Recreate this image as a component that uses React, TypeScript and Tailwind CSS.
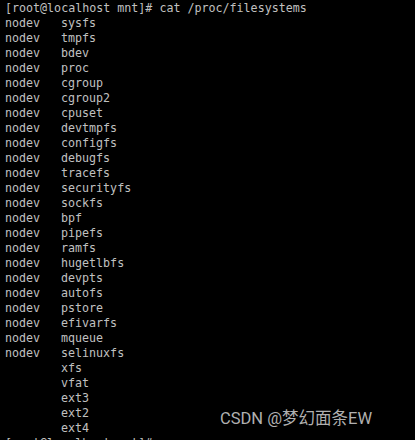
import React from "react";

const rows: [string, string][] = [
  ["nodev", "sysfs"],
  ["nodev", "tmpfs"],
  ["nodev", "bdev"],
  ["nodev", "proc"],
  ["nodev", "cgroup"],
  ["nodev", "cgroup2"],
  ["nodev", "cpuset"],
  ["nodev", "devtmpfs"],
  ["nodev", "configfs"],
  ["nodev", "debugfs"],
  ["nodev", "tracefs"],
  ["nodev", "securityfs"],
  ["nodev", "sockfs"],
  ["nodev", "bpf"],
  ["nodev", "pipefs"],
  ["nodev", "ramfs"],
  ["nodev", "hugetlbfs"],
  ["nodev", "devpts"],
  ["nodev", "autofs"],
  ["nodev", "pstore"],
  ["nodev", "efivarfs"],
  ["nodev", "mqueue"],
  ["nodev", "selinuxfs"],
  ["", "xfs"],
  ["", "vfat"],
  ["", "ext3"],
  ["", "ext2"],
  ["", "ext4"],
];

export default function App() {
  return (
    <div className="relative w-[415px] h-[440px] overflow-hidden bg-black">
      <div
        className="pl-[5px] pt-[1px] text-[11.67px] leading-[15px] text-[#c0c0c0] whitespace-pre"
        style={{ fontFamily: '"DejaVu Sans Mono", "Liberation Mono", monospace' }}
      >
        <div>[root@localhost mnt]# cat /proc/filesystems</div>
        {rows.map(([a, b], i) => (
          <div key={i} className="flex">
            <span className="w-[56px]">{a}</span>
            <span>{b}</span>
          </div>
        ))}
        <div>[root@localhost mnt]# </div>
      </div>
      <div
        className="absolute left-[220px] top-[408px] text-[16.5px] leading-[22px] text-[#b0b0b0] whitespace-nowrap"
        style={{ fontFamily: 'Roboto, "Noto Sans CJK SC", sans-serif' }}
      >
        CSDN @梦幻面条EW
      </div>
    </div>
  );
}
